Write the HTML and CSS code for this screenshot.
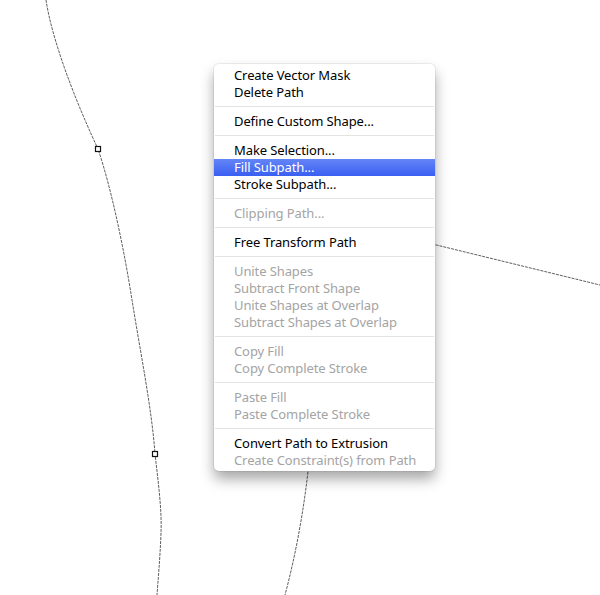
FILE: index.html
```html
<!DOCTYPE html>
<html lang="en">
  <head>
    <meta charset="UTF-8" />
    <title>Path context menu</title>
    <link rel="stylesheet" href="styles.css">
  </head>
  <body>
    <div id="canvas">
      <!-- 画布上的路径 -->
      <svg class="paths" width="600" height="595" viewBox="0 0 600 595">
        <path d="M46,0 C52,40 75,100 98,149 C112,190 125,255 132,300 C140,350 152,410 155,454 C158,480 162,510 161,533 C160,560 158,580 157,595" />
        <path d="M312,420 C310,470 301,535 285,595" />
        <path d="M420,241 L600,285" />
        <rect class="anchor" x="95.5" y="146.5" width="5" height="5" />
        <rect class="anchor" x="152.5" y="451.5" width="5" height="5" />
      </svg>

      <!-- 右键菜单 -->
      <ul class="menu">
        <li class="item">Create Vector Mask</li>
        <li class="item">Delete Path</li>
        <li class="sep"></li>
        <li class="item">Define Custom Shape...</li>
        <li class="sep"></li>
        <li class="item">Make Selection...</li>
        <li class="item active">Fill Subpath...</li>
        <li class="item">Stroke Subpath...</li>
        <li class="sep"></li>
        <li class="item off">Clipping Path...</li>
        <li class="sep"></li>
        <li class="item">Free Transform Path</li>
        <li class="sep"></li>
        <li class="item off">Unite Shapes</li>
        <li class="item off">Subtract Front Shape</li>
        <li class="item off">Unite Shapes at Overlap</li>
        <li class="item off">Subtract Shapes at Overlap</li>
        <li class="sep"></li>
        <li class="item off">Copy Fill</li>
        <li class="item off">Copy Complete Stroke</li>
        <li class="sep"></li>
        <li class="item off">Paste Fill</li>
        <li class="item off">Paste Complete Stroke</li>
        <li class="sep"></li>
        <li class="item">Convert Path to Extrusion</li>
        <li class="item off">Create Constraint(s) from Path</li>
      </ul>
    </div>
  </body>
</html>
```

FILE: styles.css
```css
* {
  margin: 0;
  padding: 0;
}
ul {
  list-style: none;
}
body {
  background-color: #fff;
  font-family: "Noto Sans", "DejaVu Sans", sans-serif;
}
#canvas {
  position: relative;
  width: 600px;
  height: 595px;
  overflow: hidden;
}

#canvas .paths {
  position: absolute;
  left: 0;
  top: 0;
}

#canvas .paths path {
  fill: none;
  stroke: #5e5e5e;
  stroke-width: 1;
  stroke-dasharray: 3 1;
}

#canvas .paths .anchor {
  fill: #fff;
  stroke: #111;
  stroke-width: 1.2;
}

.menu {
  position: absolute;
  left: 214px;
  top: 64px;
  width: 221px;
  padding: 3px 0 2px;
  background-color: #fff;
  border-radius: 5px;
  box-shadow: 0 0 0 1px rgba(0, 0, 0, 0.06), 0 8px 14px rgba(0, 0, 0, 0.35);
}

.menu .item {
  height: 17px;
  padding-left: 20px;
  font-size: 13px;
  line-height: 17px;
  letter-spacing: -0.1px;
  color: #000;
  white-space: nowrap;
}

.menu .item.off {
  color: #a4a4a4;
}

.menu .item.active {
  background: linear-gradient(#6485f6, #3a5ff2);
  color: #fff;
}

.menu .sep {
  height: 1px;
  margin: 5px 1px 6px;
  background-color: #e3e3e3;
}
```
